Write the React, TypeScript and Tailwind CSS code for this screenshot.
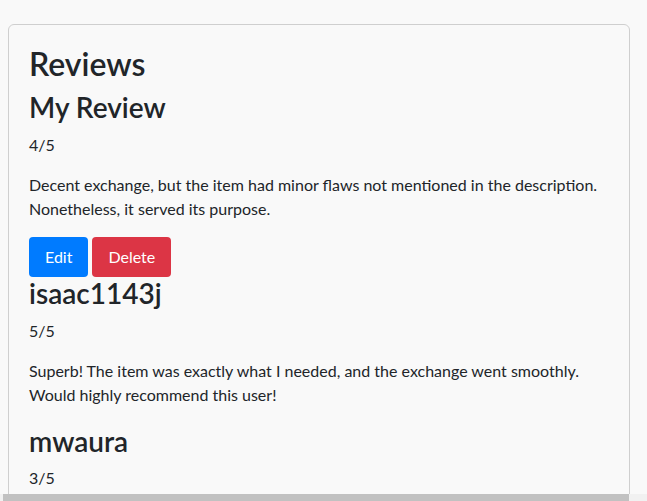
const reviews = [
  {
    user: "isaac1143j",
    rating: "5/5",
    text: "Superb! The item was exactly what I needed, and the exchange went smoothly. Would highly recommend this user!",
  },
  {
    user: "mwaura",
    rating: "3/5",
    text: "",
  },
];

export default function App() {
  return (
    <div className="min-h-screen bg-[#f9f9f9] px-2 pt-6 text-[#212529] font-['Lato','Segoe_UI',sans-serif]">
      <div className="w-[622px] rounded-md border border-[#cfcfcf] bg-[#f9f9f9] px-5 pt-5 pb-5">
        <h2 className="mb-2 text-[32px] leading-[1.2] font-semibold">Reviews</h2>

        {/* own review */}
        <h3 className="mb-2 text-[28px] leading-[1.2] font-semibold">My Review</h3>
        <p className="mb-4 text-base leading-6">4/5</p>
        <p className="mb-4 text-base leading-6">
          Decent exchange, but the item had minor flaws not mentioned in the
          description. Nonetheless, it served its purpose.
        </p>
        <div className="flex gap-1">
          <button className="rounded bg-[#007bff] px-4 py-2 text-base leading-6 text-white">
            Edit
          </button>
          <button className="rounded bg-[#dc3545] px-4 py-2 text-base leading-6 text-white">
            Delete
          </button>
        </div>

        {reviews.map((r) => (
          <div key={r.user}>
            <h3 className="mb-2 text-[28px] leading-[1.2] font-semibold">{r.user}</h3>
            <p className="mb-4 text-base leading-6">{r.rating}</p>
            {r.text && <p className="mb-[18px] text-base leading-6">{r.text}</p>}
          </div>
        ))}
      </div>

      {/* horizontal scrollbar strip */}
      <div className="fixed bottom-0 left-0 flex h-[7px] w-full bg-[#f1f1f1]">
        <div className="ml-[3px] h-full w-[626px] bg-[#c1c1c1]" />
      </div>
    </div>
  );
}
